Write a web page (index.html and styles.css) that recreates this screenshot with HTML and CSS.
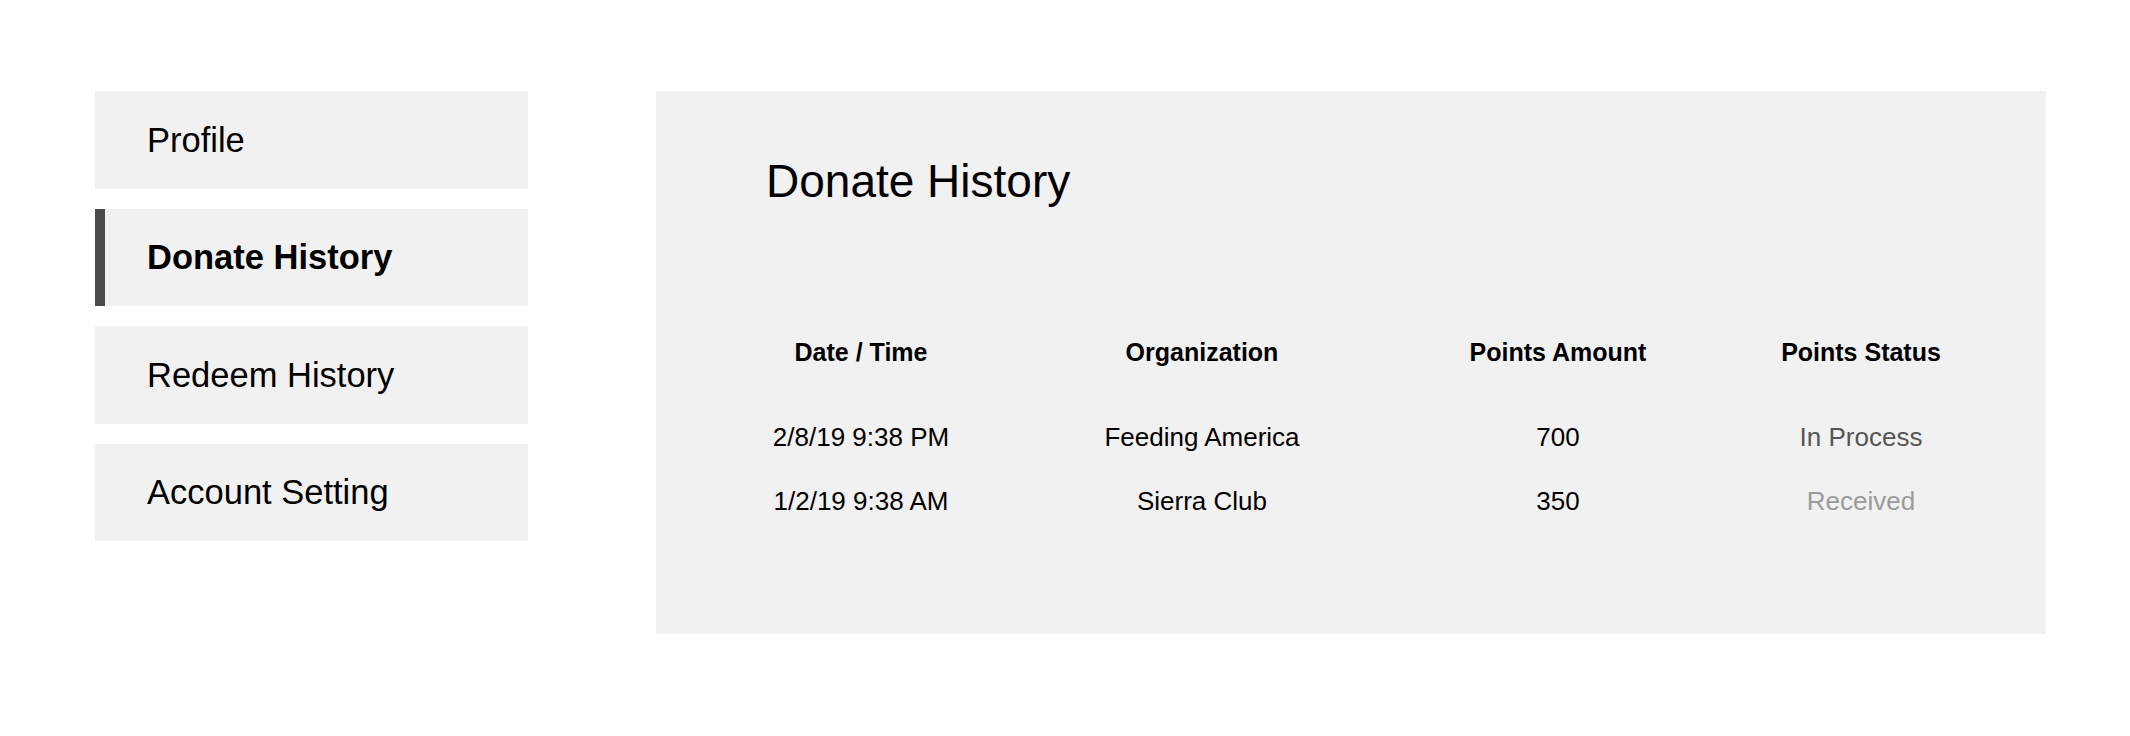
FILE: index.html
```html
<!DOCTYPE html>
<html lang="en">
<head>
<meta charset="utf-8">
<title>Donate History</title>
<link rel="stylesheet" href="styles.css">
</head>
<body>
<div class="page">
  <nav class="sidebar">
    <div class="nav-item">Profile</div>
    <div class="nav-item active">Donate History</div>
    <div class="nav-item">Redeem History</div>
    <div class="nav-item">Account Setting</div>
  </nav>
  <main class="panel">
    <h1 class="title">Donate History</h1>
    <div class="table">
      <div class="row head">
        <div class="cell">Date / Time</div>
        <div class="cell">Organization</div>
        <div class="cell">Points Amount</div>
        <div class="cell">Points Status</div>
      </div>
      <div class="row">
        <div class="cell">2/8/19 9:38 PM</div>
        <div class="cell">Feeding America</div>
        <div class="cell">700</div>
        <div class="cell status-process">In Process</div>
      </div>
      <div class="row">
        <div class="cell">1/2/19 9:38 AM</div>
        <div class="cell">Sierra Club</div>
        <div class="cell">350</div>
        <div class="cell status-received">Received</div>
      </div>
    </div>
  </main>
</div>
</body>
</html>
```
FILE: styles.css
```css
html, body {
  margin: 0;
  padding: 0;
  background: #ffffff;
}
body {
  font-family: "Liberation Sans", Arial, Helvetica, sans-serif;
  color: #000;
}
.page {
  display: flex;
  align-items: flex-start;
  padding: 91px 0 0 95px;
  gap: 128px;
}
.sidebar {
  width: 433px;
  display: flex;
  flex-direction: column;
  gap: 20px;
}
.nav-item {
  box-sizing: border-box;
  height: 97.5px;
  display: flex;
  align-items: center;
  padding-left: 52px;
  background: #f1f1f1;
  font-size: 34.5px;
  line-height: 1;
}
.nav-item.active {
  font-weight: bold;
  border-left: 10px solid #4a4a4a;
  padding-left: 42px;
}
.panel {
  box-sizing: border-box;
  width: 1390px;
  height: 543px;
  background: #f1f1f1;
  padding: 67px 0 0 0;
}
.title {
  margin: 0 0 136px 110px;
  font-size: 46px;
  font-weight: normal;
  line-height: 1;
}
.table {
  margin-left: 55px;
  display: flex;
  flex-direction: column;
  gap: 38px;
}
.row {
  display: grid;
  grid-template-columns: 300px 382px 330px 276px;
  font-size: 26px;
  line-height: 1;
}
.row.head {
  font-size: 25px;
  font-weight: bold;
  margin-bottom: 21px;
}
.cell {
  text-align: center;
  white-space: nowrap;
}
.status-process {
  color: #555555;
}
.status-received {
  color: #9b9b9b;
}
```
